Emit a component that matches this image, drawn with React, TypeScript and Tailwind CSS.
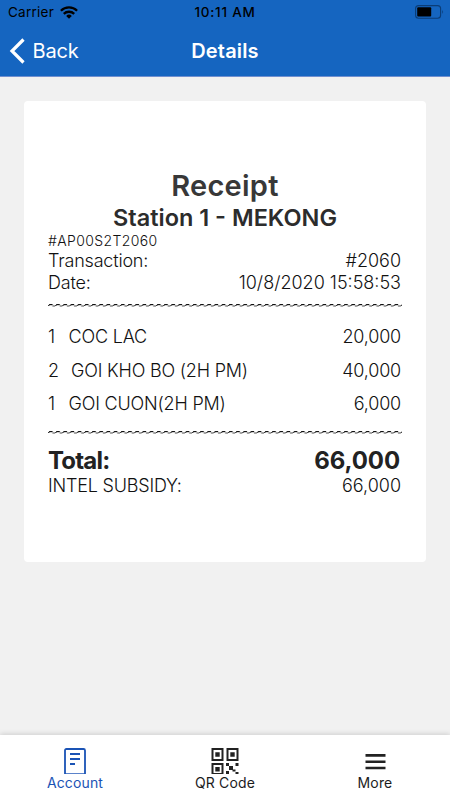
import type { ReactNode } from 'react';

const ITEMS = [
  { qty: 1, name: 'COC LAC', price: '20,000', gap: 'ml-[13.5px]' },
  { qty: 2, name: 'GOI KHO BO (2H PM)', price: '40,000', gap: 'ml-[12px]' },
  { qty: 1, name: 'GOI CUON(2H PM)', price: '6,000', gap: 'ml-[13.5px]' },
];

function StatusBar() {
  return (
    <div className="grid h-6 grid-cols-3 items-center px-2 text-black">
      <div className="flex items-center gap-[6px] text-[13.5px] tracking-[0.25px]">
        <span>Carrier</span>
        <svg width="18" height="13" viewBox="0 0 18 13" fill="none" stroke="currentColor" strokeWidth="2.3">
          <path d="M0.9 4.7a11.6 11.6 0 0 1 16.2 0" />
          <path d="M3.8 7.9a7.4 7.4 0 0 1 10.4 0" />
          <path d="M9 12.8 6.2 9.9a4 4 0 0 1 5.6 0z" fill="currentColor" stroke="none" />
        </svg>
      </div>
      <div className="text-center text-[13.5px] font-medium tracking-[0.75px]">10:11 AM</div>
      <div className="flex justify-end">
        <svg width="29" height="14" viewBox="0 0 29 14" className="-mr-[2px]">
          <rect x="0.6" y="0.6" width="25" height="12.6" rx="3" fill="none" stroke="#0b3d77" strokeWidth="1.1" />
          <rect x="2.2" y="2.2" width="14" height="9.2" rx="1" fill="#000" />
          <path d="M27.2 4.8q1.6 2 0 4.2z" fill="#0b3d77" />
        </svg>
      </div>
    </div>
  );
}

function Header() {
  return (
    <div className="grid h-[53px] grid-cols-3 items-center text-white">
      <div className="flex items-center gap-[7.5px] pl-[9px] text-[20px] tracking-[-0.2px]">
        <svg width="16" height="26" viewBox="0 0 16 26" fill="none" stroke="currentColor" strokeWidth="3.2">
          <path d="M14.5 1.5 3 13l11.5 11.5" />
        </svg>
        <span>Back</span>
      </div>
      <h1 className="text-center text-[20px] font-semibold tracking-[0.15px]">Details</h1>
    </div>
  );
}

function Separator() {
  return (
    <svg className="block" width="354" height="4">
      <defs>
        <pattern id="dash" width="7.2" height="4" patternUnits="userSpaceOnUse">
          <rect x="1" y="0" width="3.6" height="1.2" fill="#111" />
          <rect x="0" y="1" width="1.4" height="1" fill="#333" />
          <rect x="4.4" y="1.4" width="2.8" height="1.2" fill="#666" />
        </pattern>
      </defs>
      <rect width="354" height="4" fill="url(#dash)" />
    </svg>
  );
}

function Row({ label, value }: { label: ReactNode; value: string }) {
  return (
    <div className="flex justify-between">
      <span className="tracking-[-0.2px]">{label}</span>
      <span>{value}</span>
    </div>
  );
}

function Receipt() {
  return (
    <div className="mx-6 mt-6 h-[461px] rounded-[4px] bg-white px-6 pt-[67px] text-[#111]">
      <h2 className="text-center text-[29px] leading-[36px] font-semibold tracking-[0.25px] text-[#383838]">Receipt</h2>
      <h3 className="text-center text-[23.5px] leading-[28px] font-semibold text-[#2c2c2c]">Station 1 - MEKONG</h3>
      <div className="text-[14px] leading-[17px] font-light tracking-[0.37px]">#AP00S2T2060</div>
      <div className="pt-px pr-px text-[18px] leading-[21.5px] font-light">
        <Row label="Transaction:" value="#2060" />
        <Row label="Date:" value="10/8/2020 15:58:53" />
      </div>
      <div className="pt-[11px]">
        <Separator />
      </div>
      <div className="pt-[12px] pr-px text-[18px] leading-[33.5px] font-light">
        {ITEMS.map((item) => (
          <div key={item.name} className="flex">
            <span>{item.qty}</span>
            <span className={`flex-1 tracking-[-0.2px] ${item.gap}`}>{item.name}</span>
            <span className="tracking-[-0.2px]">{item.price}</span>
          </div>
        ))}
      </div>
      <div className="pt-[10.5px]">
        <Separator />
      </div>
      <div className="flex justify-between pt-[12px] pr-[2px] text-[24px] leading-[27px] font-bold text-[#222]">
        <span className="tracking-[-0.8px]">Total:</span>
        <span className="tracking-[-0.1px]">66,000</span>
      </div>
      <div className="pt-px pr-px text-[18px] leading-[22px] font-light">
        <Row label="INTEL SUBSIDY:" value="66,000" />
      </div>
    </div>
  );
}

function AccountIcon() {
  return (
    <svg width="22" height="26" viewBox="0 0 22 26" fill="none" stroke="#1a53b5" strokeWidth="1.8">
      <path d="M1 26V2.5Q1 1 2.5 1h17Q21 1 21 2.5V26" />
      <path d="M1 25.6h20" strokeWidth="0.8" />
      <path d="M6 6h10M6 11h10M6 16h5" strokeWidth="2" />
    </svg>
  );
}

function QrIcon() {
  return (
    <svg width="28" height="26" viewBox="0 0 28 26" fill="#222">
      <g fill="none" stroke="#222" strokeWidth="2">
        <path d="M1.5 1h10v11h-10zM16.5 1h10v11h-10zM1.5 26V16h10v10" />
      </g>
      <path d="M4.3 4.3h4.4v4.4H4.3zM19.3 4.3h4.4v4.4h-4.4zM4.3 19h4.4v4.4H4.3z" />
      <path d="M15 15h3v3h-3zM24.5 15h3v3h-3zM18 18h4v4h-4zM21.5 21.5h3v2h-3zM15 23h3v3h-3zM24.5 24h3v2h-3z" />
      <path d="M1 25.5h11" stroke="#222" />
    </svg>
  );
}

function MenuIcon() {
  return (
    <svg width="22" height="26" viewBox="0 0 22 26" fill="#222">
      <path d="M1.5 6h20v2.7h-20zM1.5 12.5h20v2.5h-20zM1.5 18.8h20v2.5h-20z" />
    </svg>
  );
}

function TabBar() {
  const tabs = [
    { label: 'Account', icon: <AccountIcon />, color: 'text-[#1a53b5]' },
    { label: 'QR Code', icon: <QrIcon />, color: 'text-[#1c1c1c]' },
    { label: 'More', icon: <MenuIcon />, color: 'text-[#1c1c1c]' },
  ];
  return (
    <nav className="grid h-[65px] grid-cols-3 bg-white pt-[13px] shadow-[0_-1px_5px_rgba(0,0,0,0.15)]">
      {tabs.map((tab) => (
        <div
          key={tab.label}
          className={`flex flex-col items-center text-[14px] leading-[17px] tracking-[0.15px] ${tab.color}`}
        >
          {tab.icon}
          <span>{tab.label}</span>
        </div>
      ))}
    </nav>
  );
}

export default function App() {
  return (
    <div className="flex h-[800px] w-[450px] flex-col overflow-hidden bg-[#f1f1f1] font-['Inter','Liberation_Sans',sans-serif]">
      <header className="h-[77px] border-b border-[#6f8fd0] bg-[#1565c0]">
        <StatusBar />
        <Header />
      </header>
      <main className="flex-1">
        <Receipt />
      </main>
      <TabBar />
    </div>
  );
}
